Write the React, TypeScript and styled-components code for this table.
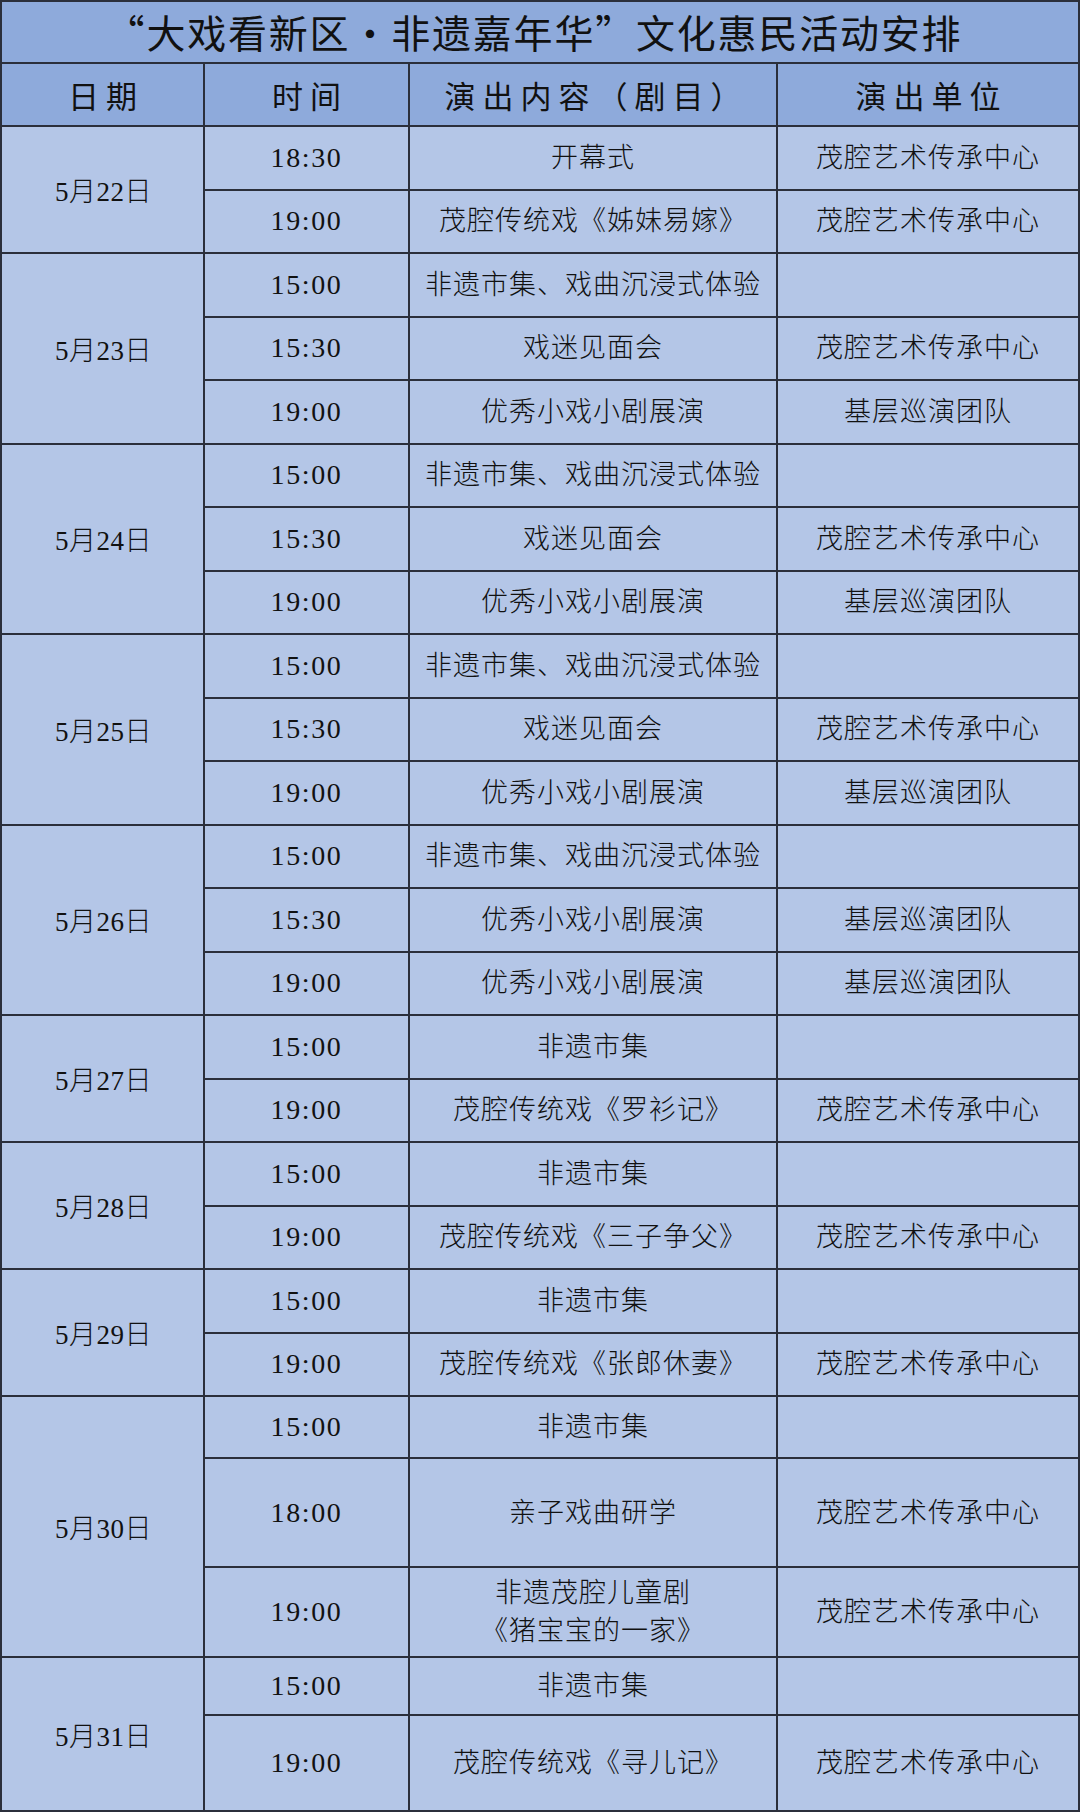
import React from "react";
import styled, { createGlobalStyle } from "styled-components";

const Global = createGlobalStyle`
  html, body { margin: 0; padding: 0; background: #b4c6e7; }
  body { font-family: "Liberation Serif", "Noto Sans CJK SC", serif; color: #111; }
  * { box-sizing: border-box; }
`;

const LINE = "2px solid #2b2f3b";

const Sheet = styled.div<{ $rows: string }>`
  width: 1080px;
  height: 1812px;
  display: grid;
  grid-template-columns: 203px 205px 368px 302px;
  grid-template-rows: ${(p) => p.$rows};
  border-left: ${LINE};
  border-top: ${LINE};
  background: #b4c6e7;
`;

const BaseCell = styled.div`
  display: flex;
  align-items: center;
  justify-content: center;
  text-align: center;
  border-right: ${LINE};
  border-bottom: ${LINE};
  white-space: pre-line;
`;

const TitleCell = styled(BaseCell)`
  grid-column: 1 / -1;
  background: #8eaadb;
  font-family: "Noto Sans CJK SC", sans-serif;
  font-feature-settings: "fwid" 1;
  font-size: 39px;
  font-weight: 400;
  letter-spacing: 1.8px;
  padding-right: 12px;
  padding-bottom: 2px;
`;

const HeadCell = styled(BaseCell)`
  background: #8eaadb;
  font-size: 31px;
  font-weight: 400;
  letter-spacing: 7px;
  padding-left: 7px;
`;

const DateCell = styled(BaseCell)<{ $span: number }>`
  grid-row: span ${(p) => p.$span};
  font-size: 27px;
  font-weight: 300;
  letter-spacing: 0.5px;
  padding-left: 2px;
`;

const TimeCell = styled(BaseCell)`
  font-size: 28px;
  font-weight: 300;
  letter-spacing: 1.6px;
`;

const TextCell = styled(BaseCell)`
  font-size: 27px;
  font-weight: 300;
  letter-spacing: 1px;
  line-height: 38px;
`;

type Row = { time: string; show: string; unit: string; h?: number };
type Group = { date: string; rows: Row[] };

const CENTER = "茂腔艺术传承中心";
const TEAM = "基层巡演团队";
const MARKET_EXP = "非遗市集、戏曲沉浸式体验";

const threeDay = (date: string): Group => ({
  date,
  rows: [
    { time: "15:00", show: MARKET_EXP, unit: "" },
    { time: "15:30", show: "戏迷见面会", unit: CENTER },
    { time: "19:00", show: "优秀小戏小剧展演", unit: TEAM },
  ],
});

const twoDay = (date: string, play: string): Group => ({
  date,
  rows: [
    { time: "15:00", show: "非遗市集", unit: "" },
    { time: "19:00", show: `茂腔传统戏《${play}》`, unit: CENTER },
  ],
});

const groups: Group[] = [
  {
    date: "5月22日",
    rows: [
      { time: "18:30", show: "开幕式", unit: CENTER },
      { time: "19:00", show: "茂腔传统戏《姊妹易嫁》", unit: CENTER },
    ],
  },
  threeDay("5月23日"),
  threeDay("5月24日"),
  threeDay("5月25日"),
  {
    date: "5月26日",
    rows: [
      { time: "15:00", show: MARKET_EXP, unit: "" },
      { time: "15:30", show: "优秀小戏小剧展演", unit: TEAM },
      { time: "19:00", show: "优秀小戏小剧展演", unit: TEAM },
    ],
  },
  twoDay("5月27日", "罗衫记"),
  twoDay("5月28日", "三子争父"),
  twoDay("5月29日", "张郎休妻"),
  {
    date: "5月30日",
    rows: [
      { time: "15:00", show: "非遗市集", unit: "", h: 62 },
      { time: "18:00", show: "亲子戏曲研学", unit: CENTER, h: 109 },
      { time: "19:00", show: "非遗茂腔儿童剧\n《猪宝宝的一家》", unit: CENTER, h: 90 },
    ],
  },
  {
    date: "5月31日",
    rows: [
      { time: "15:00", show: "非遗市集", unit: "", h: 58 },
      { time: "19:00", show: "茂腔传统戏《寻儿记》", unit: CENTER, h: 96 },
    ],
  },
];

const STD = 63.5;

export default function App() {
  const heights: number[] = [STD - 2, STD];
  groups.forEach((g) => g.rows.forEach((r) => heights.push(r.h ?? STD)));
  const rowTemplate = heights.map((h) => `${h}px`).join(" ");

  return (
    <>
      <Global />
      <Sheet $rows={rowTemplate} lang="zh-CN">
        <TitleCell>“大戏看新区・非遗嘉年华”文化惠民活动安排</TitleCell>
        <HeadCell>日期</HeadCell>
        <HeadCell>时间</HeadCell>
        <HeadCell>演出内容（剧目）</HeadCell>
        <HeadCell>演出单位</HeadCell>
        {groups.map((g) => (
          <React.Fragment key={g.date}>
            <DateCell $span={g.rows.length}>{g.date}</DateCell>
            {g.rows.map((r, i) => (
              <React.Fragment key={i}>
                <TimeCell>{r.time}</TimeCell>
                <TextCell>{r.show}</TextCell>
                <TextCell>{r.unit}</TextCell>
              </React.Fragment>
            ))}
          </React.Fragment>
        ))}
      </Sheet>
    </>
  );
}
